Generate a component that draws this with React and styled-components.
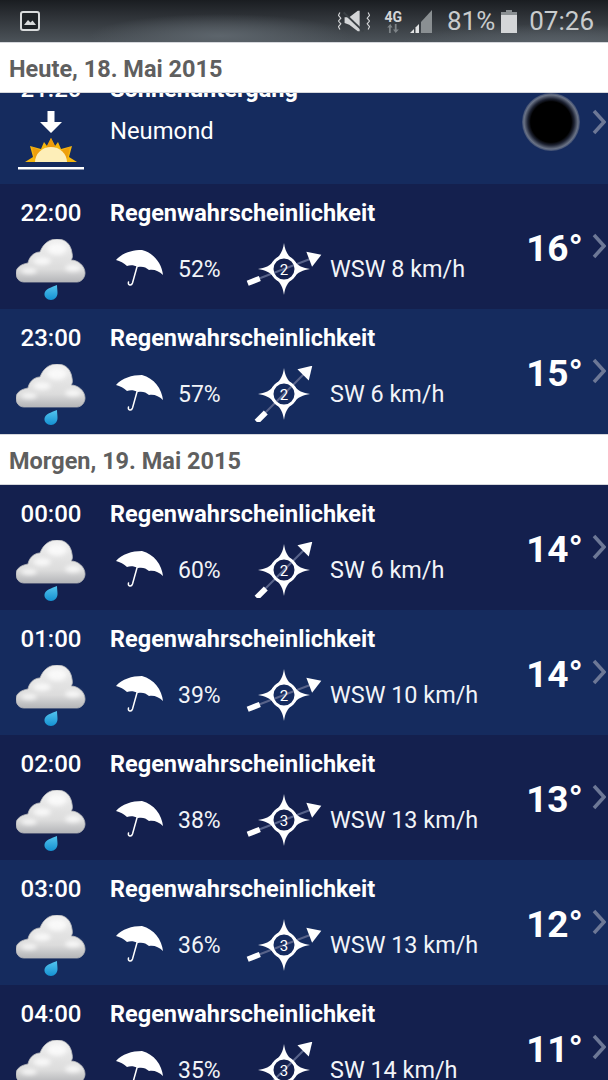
import React from 'react'
import styled, { createGlobalStyle } from 'styled-components'

const GlobalStyle = createGlobalStyle`
    html, body {
        margin: 0;
        padding: 0;
        height: 1080px;
        overflow: hidden;
        background: #14204e;
        font-family: Roboto, "Liberation Sans", sans-serif;
    }
`

const today = [
    { time: '22:00', rain: '52%', angle: -21, force: 2, wind: 'WSW 8 km/h', temp: '16°', light: false },
    { time: '23:00', rain: '57%', angle: -45, force: 2, wind: 'SW 6 km/h', temp: '15°', light: true },
]

const tomorrow = [
    { time: '00:00', rain: '60%', angle: -45, force: 2, wind: 'SW 6 km/h', temp: '14°', light: false },
    { time: '01:00', rain: '39%', angle: -21, force: 2, wind: 'WSW 10 km/h', temp: '14°', light: true },
    { time: '02:00', rain: '38%', angle: -21, force: 3, wind: 'WSW 13 km/h', temp: '13°', light: false },
    { time: '03:00', rain: '36%', angle: -21, force: 3, wind: 'WSW 13 km/h', temp: '12°', light: true },
    { time: '04:00', rain: '35%', angle: -45, force: 3, wind: 'SW 14 km/h', temp: '11°', light: false },
]

function GalleryIcon() {
    return (
        <svg width="20" height="20" viewBox="0 0 20 20">
            <rect x="1" y="1" width="18" height="18" rx="2" fill="#1f2327" stroke="#d8dadb" strokeWidth="2" />
            <path d="M4 14 L8 9 L10.5 11.5 L12.5 9.5 L16 14 Z" fill="#d8dadb" />
        </svg>
    )
}

function MuteIcon() {
    return (
        <svg width="32" height="24" viewBox="0 0 34 24">
            <path d="M2 3 L0.5 6 L3 9 L0.5 12 L3 15 L0.5 18 L2 21" fill="none" stroke="#d4d6d8" strokeWidth="1.2" />
            <path d="M32 3 L33.5 6 L31 9 L33.5 12 L31 15 L33.5 18 L32 21" fill="none" stroke="#d4d6d8" strokeWidth="1.2" />
            <path d="M7 8 L12 8 L21 1 L23 1 L23 23 L21 23 L12 16 L7 14 Z" fill="#d4d6d8" />
            <path d="M6 3 L27 23" stroke="#3a4045" strokeWidth="2" />
        </svg>
    )
}

function NetworkIcon() {
    return (
        <NetworkBox>
            <NetworkLabel>4G</NetworkLabel>
            <svg width="14" height="9" viewBox="0 0 14 10">
                <path d="M2.500 10 V4 H0.500 L4 0 L6.500 4 H4.500 V10 Z M9 0 V6 H7 L10 10 L13.500 6 H11 V0 Z" fill="#7d8387" />
            </svg>
        </NetworkBox>
    )
}

function SignalIcon() {
    return (
        <svg width="22" height="23" viewBox="0 0 22 23">
            <path d="M0 23 L4 19 V23 Z" fill="#e2e3e4" />
            <path d="M5.5 17.5 L9 14 V23 H5.5 Z" fill="#e2e3e4" />
            <path d="M11 12 L22 0 V23 H11 Z" fill="#8a8f92" />
        </svg>
    )
}

function BatteryIcon() {
    return (
        <svg width="16" height="23" viewBox="0 0 16 23">
            <path d="M5 0 H11 V2 H16 V23 H0 V2 H5 Z" fill="#8a8f92" />
            <rect x="0" y="5" width="16" height="18" fill="#d4d6d8" />
        </svg>
    )
}

function SunsetIcon() {
    return (
        <svg width="66" height="60" viewBox="0 0 66 60">
            <path d="M29.5 0 H36.5 V11 H44 L33 22 L22 11 H29.5 Z" fill="#fff" />
            <path d="M7 51 L15 46 L12 35 L23 38 L26 31 L29 35 L33 27 L37 35 L40 31 L43 38 L54 35 L51 46 L59 51 Z" fill="#f5b60f" />
            <path d="M33 27 L38 37 H28 Z" fill="#ec9a0a" />
            <path d="M14 36 L24 40 L17 49 Z M52 36 L42 40 L49 49 Z" fill="#ee9f0c" />
            <path d="M17 51 A16 15 0 0 1 49 51 Z" fill="#fdeeb8" />
            <rect x="0" y="56" width="66" height="2.5" fill="#fff" />
        </svg>
    )
}

function CloudIcon() {
    return (
        <svg width="70" height="62" viewBox="0 0 70 62">
            <defs>
                <linearGradient id="cloudBody" x1="0" y1="0" x2="0" y2="1">
                    <stop offset="0" stopColor="#efefef" />
                    <stop offset="0.7" stopColor="#dcdcdc" />
                    <stop offset="1" stopColor="#b4b5b8" />
                </linearGradient>
                <linearGradient id="dropBody" x1="0" y1="0" x2="0" y2="1">
                    <stop offset="0" stopColor="#55c5ee" />
                    <stop offset="1" stopColor="#1491d2" />
                </linearGradient>
                <filter id="cloudSoft" x="-30%" y="-30%" width="160%" height="160%">
                    <feGaussianBlur stdDeviation="2" />
                </filter>
            </defs>
            <path
                d="M8 43 C3 43 0 39 0 34 C0 28 6 25 12 24 C13 18 18 13 24 13 C27 5 33 0 41 0 C50 0 55 6 56 14 C57 18 56 20 55 21 C62 21 69 27 69 34 C69 39 65 43 61 43 Z"
                fill="url(#cloudBody)"
                stroke="#b9babd"
                strokeWidth="0.8"
            />
            <g filter="url(#cloudSoft)" fill="#fff" opacity="0.75">
                <ellipse cx="41" cy="10" rx="10" ry="6" />
                <ellipse cx="26" cy="22" rx="9" ry="4" />
                <ellipse cx="13" cy="32" rx="8" ry="3" />
                <ellipse cx="57" cy="29" rx="8" ry="3.500" />
            </g>
            <path d="M41 46 C41 49 41.500 51 41.500 54 C41.500 58 38.500 61 35 61 C31 61 28 58 28.500 54.500 C29 50 36 48 41 46 Z" fill="url(#dropBody)" />
        </svg>
    )
}

function UmbrellaIcon() {
    return (
        <svg width="48" height="38" viewBox="0 0 48 38">
            <path
                d="M0 10 C6 3 16 0 26 0 C38 3 46 14 47 25 C43 21 38 19 33 20 C30 17 26 16 22 17 C18 15 14 15 11 16 C8 13 4 11 0 10 Z"
                fill="#fff"
            />
            <path d="M21.500 15 L16.500 33 C15.500 36 11.500 35.500 12.500 32" fill="none" stroke="#fff" strokeWidth="1.500" strokeLinecap="round" />
        </svg>
    )
}

function CompassIcon({ angle, force }) {
    return (
        <svg width="80" height="56" viewBox="-40 -28 80 56">
            <g transform={`rotate(${angle})`}>
                <line x1="-28" y1="0" x2="30" y2="0" stroke="#58638a" strokeWidth="2" />
                <rect x="-39" y="-2.500" width="13" height="5.500" fill="#fff" />
                <path d="M27 -8 L40 0 L27 8 Z" fill="#fff" />
            </g>
            {[0, 90, 180, 270].map(turn => (
                <path key={turn} transform={`rotate(${turn})`} d="M0 -26 C1 -19 3 -14 9 -9 A13 13 0 0 0 -9 -9 C-3 -14 -1 -19 0 -26 Z" fill="#fff" />
            ))}
            <circle r="12" fill="none" stroke="#fff" strokeWidth="3" />
            <ForceText y="5.500" textAnchor="middle">{force}</ForceText>
        </svg>
    )
}

function Chevron() {
    return (
        <svg width="14" height="26" viewBox="0 0 14 26">
            <path d="M2 2 L12 13 L2 24" fill="none" stroke="#6d7896" strokeWidth="3.500" />
        </svg>
    )
}

function HourRow({ time, rain, angle, force, wind, temp, light }) {
    return (
        <Row $light={light}>
            <Side>
                <Time>{time}</Time>
                <CloudIcon />
            </Side>
            <Main>
                <Title>Regenwahrscheinlichkeit</Title>
                <Stats>
                    <UmbrellaIcon />
                    <Rain>{rain}</Rain>
                    <CompassIcon angle={angle} force={force} />
                    <Wind>{wind}</Wind>
                </Stats>
            </Main>
            <Temp>{temp}</Temp>
            <Arrow><Chevron /></Arrow>
        </Row>
    )
}

export default function App() {
    return (
        <Page>
            <GlobalStyle />
            <StatusBar>
                <GalleryIcon />
                <StatusRight>
                    <MuteIcon />
                    <NetworkIcon />
                    <SignalIcon />
                    <StatusText>81%</StatusText>
                    <BatteryIcon />
                    <StatusText $last>07:26</StatusText>
                </StatusRight>
            </StatusBar>
            <DayHeader>Heute, 18. Mai 2015</DayHeader>
            <SunsetClip>
                <SunsetRow>
                    <SunsetSide>
                        <Time>21:20</Time>
                        <SunsetIcon />
                    </SunsetSide>
                    <Main>
                        <Title>Sonnenuntergang</Title>
                        <MoonLabel>Neumond</MoonLabel>
                    </Main>
                    <Moon />
                    <Arrow><Chevron /></Arrow>
                </SunsetRow>
            </SunsetClip>
            {today.map(hour => <HourRow key={hour.time} {...hour} />)}
            <DayHeader>Morgen, 19. Mai 2015</DayHeader>
            {tomorrow.map(hour => <HourRow key={hour.time} {...hour} />)}
        </Page>
    )
}

const Page = styled.div`
    width: 608px;
    height: 1080px;
    overflow: hidden;
`
const StatusBar = styled.div`
    height: 42px;
    box-sizing: border-box;
    padding: 0 14px 0 20px;
    display: flex;
    align-items: center;
    justify-content: space-between;
    background:
        radial-gradient(ellipse 130px 22px at 220px 36px, #5d656c, transparent),
        radial-gradient(ellipse 160px 20px at 560px 44px, #596168, transparent),
        linear-gradient(#1a1d21, #2c3035 35%, #4c5359);
`
const StatusRight = styled.div`
    display: flex;
    align-items: center;
`
const StatusText = styled.span`
    font-size: 26px;
    line-height: 44px;
    color: #c8cbcd;
    margin: ${p => (p.$last ? '0 0 0 12px' : '0 6px 0 15px')};
`
const NetworkBox = styled.div`
    display: flex;
    flex-direction: column;
    align-items: center;
    margin: 0 8px 0 14px;
`
const NetworkLabel = styled.span`
    font-size: 14px;
    line-height: 14px;
    font-weight: 700;
    color: #d4d6d8;
`
const DayHeader = styled.div`
    height: 51px;
    box-sizing: border-box;
    padding: 1px 0 0 9px;
    font-size: 23.5px;
    line-height: 50px;
    font-weight: 700;
    color: #5f5f5f;
    background: #fff;
    border-top: 1px solid #d5d7dc;
    border-bottom: 1px solid #d5d7dc;
`
const SunsetClip = styled.div`
    height: 91px;
    overflow: hidden;
`
const Row = styled.div`
    height: 125px;
    box-sizing: border-box;
    display: flex;
    background: ${p => (p.$light ? '#152b5e' : '#14204e')};
`
const SunsetRow = styled(Row)`
    margin-top: -33px;
    background: #152b5e;
`
const Side = styled.div`
    width: 102px;
    flex: none;
    padding-top: 15px;
    box-sizing: border-box;
    display: flex;
    flex-direction: column;
    align-items: center;
    gap: 12px;
`
const SunsetSide = styled(Side)`
    gap: 8px;
`
const Time = styled.div`
    font-size: 24px;
    line-height: 28px;
    font-weight: 500;
    color: #fff;
`
const Main = styled.div`
    flex: 1;
    padding: 15px 0 0 8px;
`
const Title = styled.div`
    font-size: 23.5px;
    line-height: 28px;
    font-weight: 700;
    color: #fff;
`
const MoonLabel = styled.div`
    margin-top: 13px;
    font-size: 23.8px;
    line-height: 30px;
    color: #fff;
`
const Stats = styled.div`
    margin-top: 14px;
    height: 56px;
    display: flex;
    align-items: center;
    padding-left: 6px;
`
const Rain = styled.span`
    width: 66px;
    margin-left: 14px;
    font-size: 23px;
    color: #f2f4f8;
`
const Wind = styled.span`
    margin-left: 6px;
    font-size: 23.4px;
    color: #f2f4f8;
`
const ForceText = styled.text`
    font-family: Roboto, sans-serif;
    font-size: 15px;
    fill: #fff;
`
const Temp = styled.div`
    flex: none;
    padding-top: 42px;
    font-size: 37px;
    line-height: 46px;
    font-weight: 700;
    color: #fff;
`
const Arrow = styled.div`
    width: 25px;
    flex: none;
    padding: 49px 2px 0 9px;
    box-sizing: border-box;
`
const Moon = styled.div`
    width: 58px;
    height: 58px;
    flex: none;
    margin: 33px 3px 0 0;
    border-radius: 50%;
    background: radial-gradient(circle closest-side, #000 0, #000 70%, #1d2232 80%, #6a7386 93%, #3a4a70 100%);
`
